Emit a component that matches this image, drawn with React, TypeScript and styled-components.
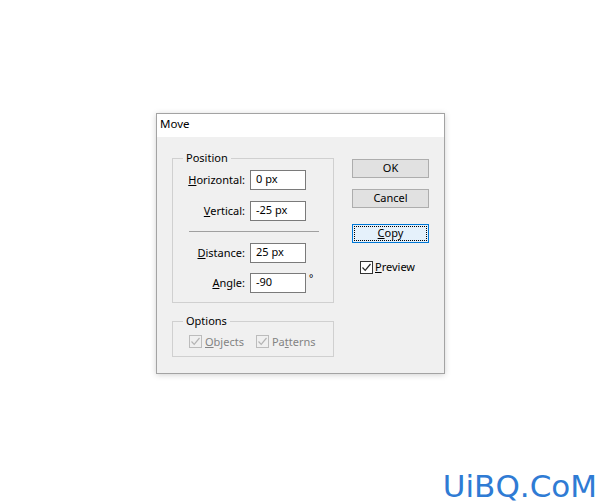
import styled, { createGlobalStyle } from "styled-components";

const GlobalStyle = createGlobalStyle`
  html, body {
    margin: 0;
    padding: 0;
    background: #ffffff;
  }
  * {
    box-sizing: border-box;
  }
`;

const Check = ({ disabled }: { disabled?: boolean }) => (
  <svg width="11" height="11" viewBox="0 0 11 11">
    <path
      d="M1.5 5.5 L4.2 8.3 L9.5 2"
      fill="none"
      stroke={disabled ? "#b4b4b4" : "#262626"}
      strokeWidth="1.2"
    />
  </svg>
);

export default function App() {
  return (
    <Page>
      <GlobalStyle />
      <Dialog>
        <TitleBar>Move</TitleBar>
        <Body>
          <LeftColumn>
            <Group>
              <Legend>Position</Legend>
              <Row>
                <Label>
                  <u>H</u>orizontal:
                </Label>
                <Field>0 px</Field>
              </Row>
              <Row $top={11}>
                <Label>
                  <u>V</u>ertical:
                </Label>
                <Field>-25 px</Field>
              </Row>
              <Divider />
              <Row $top={11}>
                <Label>
                  <u>D</u>istance:
                </Label>
                <Field>25 px</Field>
              </Row>
              <Row $top={10}>
                <Label>
                  <u>A</u>ngle:
                </Label>
                <Field>-90</Field>
                <Degree>°</Degree>
              </Row>
            </Group>

            <OptionsGroup>
              <Legend>Options</Legend>
              <CheckRow>
                <CheckItem $disabled>
                  <Box $disabled>
                    <Check disabled />
                  </Box>
                  <span>
                    <u>O</u>bjects
                  </span>
                </CheckItem>
                <CheckItem $disabled>
                  <Box $disabled>
                    <Check disabled />
                  </Box>
                  <span>
                    Pa<u>t</u>terns
                  </span>
                </CheckItem>
              </CheckRow>
            </OptionsGroup>
          </LeftColumn>

          <RightColumn>
            <Button>OK</Button>
            <Button $top={11}>Cancel</Button>
            <Button $top={16} $focused>
              <u>C</u>opy
            </Button>
            <PreviewItem>
              <Box>
                <Check />
              </Box>
              <span>
                <u>P</u>review
              </span>
            </PreviewItem>
          </RightColumn>
        </Body>
      </Dialog>
      <Watermark>UiBQ.CoM</Watermark>
    </Page>
  );
}

const Page = styled.div`
  position: relative;
  width: 600px;
  height: 503px;
  padding: 113px 0 0 156px;
  background: #ffffff;
  font-family: "Segoe UI", "Noto Sans", "Liberation Sans", sans-serif;
  font-size: 11px;
  color: #000;
  overflow: hidden;
`;

const Dialog = styled.div`
  width: 289px;
  border: 1px solid #a3a3a3;
  box-shadow: 0 1px 6px rgba(0, 0, 0, 0.18);
  background: #f0f0f0;
`;

const TitleBar = styled.div`
  height: 23px;
  line-height: 20px;
  padding-left: 3px;
  font-size: 11.5px;
  background: #ffffff;
`;

const Body = styled.div`
  display: flex;
  padding: 13px 14px 16px 15px;
`;

const LeftColumn = styled.div`
  display: flex;
  flex-direction: column;
  width: 162px;
`;

const Group = styled.fieldset`
  margin: 0;
  padding: 4px 0 9px 0;
  min-inline-size: 0;
  border: 1px solid #d0d0d0;
  display: flex;
  flex-direction: column;
`;

const OptionsGroup = styled(Group)`
  margin-top: 10px;
  padding: 6px 0 8px 0;
`;

const Legend = styled.legend`
  margin-left: 10px;
  padding: 0 3px;
  height: 16px;
  line-height: 15px;
`;

const Row = styled.div<{ $top?: number }>`
  display: flex;
  align-items: center;
  height: 20px;
  margin-top: ${(p) => p.$top ?? 0}px;
`;

const Label = styled.span`
  width: 72px;
  margin-right: 5px;
  padding-bottom: 2px;
  text-align: right;
  white-space: nowrap;
`;

const Field = styled.div`
  width: 56px;
  height: 20px;
  line-height: 16px;
  padding-left: 5px;
  border: 1px solid #7a7a7a;
  background: #ffffff;
`;

const Degree = styled.span`
  align-self: flex-start;
  margin-left: 3px;
  font-size: 10px;
  line-height: 10px;
`;

const Divider = styled.div`
  margin: 10px 0 0 16px;
  width: 130px;
  height: 1px;
  background: #a0a0a0;
`;

const CheckRow = styled.div`
  display: flex;
  align-items: center;
  height: 13px;
  padding-left: 16px;
  gap: 12px;
`;

const CheckItem = styled.label<{ $disabled?: boolean }>`
  display: flex;
  align-items: center;
  gap: 3px;
  color: ${(p) => (p.$disabled ? "#838383" : "#000")};
  white-space: nowrap;

  span:last-child {
    padding-bottom: 1px;
  }
`;

const Box = styled.span<{ $disabled?: boolean }>`
  display: flex;
  align-items: center;
  justify-content: center;
  width: 13px;
  height: 13px;
  border: 1px solid ${(p) => (p.$disabled ? "#bcbcbc" : "#333333")};
  background: ${(p) => (p.$disabled ? "#f0f0f0" : "#ffffff")};
`;

const RightColumn = styled.div`
  display: flex;
  flex-direction: column;
  margin-left: 18px;
  padding-top: 9px;
`;

const Button = styled.div<{ $top?: number; $focused?: boolean }>`
  width: 77px;
  height: 19px;
  line-height: 15px;
  margin-top: ${(p) => p.$top ?? 0}px;
  text-align: center;
  border: 1px solid ${(p) => (p.$focused ? "#0078d7" : "#adadad")};
  background: ${(p) => (p.$focused ? "#e5f1fb" : "#e1e1e1")};
  outline: ${(p) => (p.$focused ? "1px dotted #000" : "none")};
  outline-offset: -3px;
`;

const PreviewItem = styled(CheckItem)`
  margin: 16px 0 0 8px;
  gap: 2px;
`;

const Watermark = styled.div`
  position: absolute;
  right: 3px;
  bottom: 1px;
  font-family: "DejaVu Sans", "Noto Sans", sans-serif;
  font-size: 31px;
  line-height: 32px;
  color: #2f7bd4;
`;
